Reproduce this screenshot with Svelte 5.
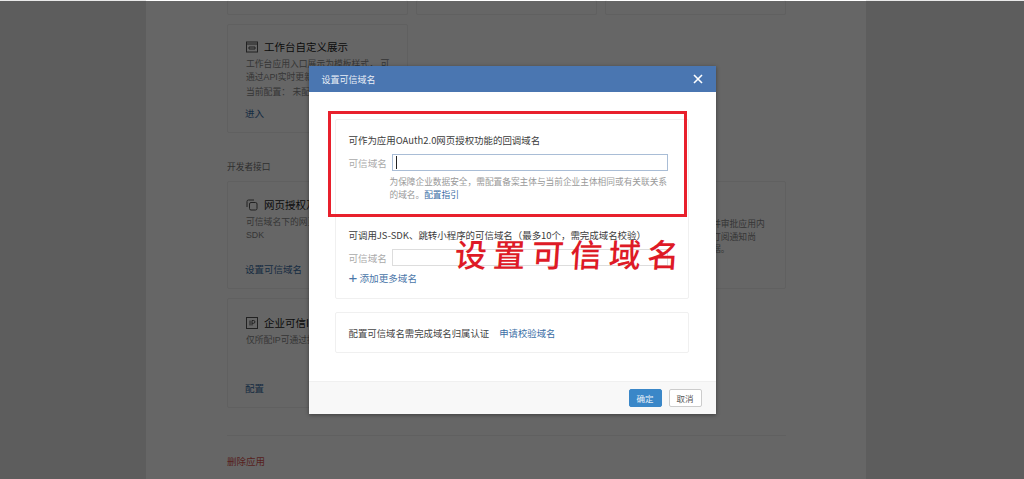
<script lang="ts">
  const rules = [
    { title: '可作为应用OAuth2.0网页授权功能的回调域名', active: true },
    { title: '可调用JS-SDK、跳转小程序的可信域名（最多10个，需完成域名校验）', active: false }
  ];
</script>

<div class="page">
  <main class="content">
    <div class="grid">
      <div class="card stub"></div>
      <div class="card stub"></div>
      <div class="card stub"></div>
    </div>
    <div class="grid">
      <section class="card card-tall">
        <h3>
          <svg viewBox="0 0 12 12" aria-hidden="true"><rect x=".5" y="1" width="11" height="10" /><path d="M.5 3h11M3 6h6v2H3z" /></svg>
          工作台自定义展示
        </h3>
        <p>工作台应用入口展示为模板样式，&nbsp;可<br />通过API实时更新内容</p>
        <p class="config">当前配置： 未配置</p>
        <a class="enter" href="#enter">进入</a>
      </section>
    </div>

    <div class="section-label">开发者接口</div>

    <div class="grid">
      <section class="card card-dev">
        <h3>
          <svg viewBox="0 0 12 12" aria-hidden="true"><path d="M8 1H2.500A1.500 1.500 0 0 0 1 2.500V8" /><rect x="3.500" y="3.500" width="7.500" height="7.500" rx="1.500" /></svg>
          网页授权及JS-SDK
        </h3>
        <p>可信域名下的网页可使用网页授权及调用JS-<br />SDK</p>
        <a class="bottom-link" href="#domain">设置可信域名</a>
      </section>
      <section class="card card-dev">
        <h3>企业微信授权登录</h3>
      </section>
      <section class="card card-dev">
        <h3>审批</h3>
        <p class="right-text">调用接口的应用可关注并审批应用内<br />提交的申请，可收到的订阅通知尚<br />未处理的全部审批的数据。</p>
      </section>
    </div>

    <div class="grid">
      <section class="card card-ip">
        <h3>
          <svg viewBox="0 0 12 12" aria-hidden="true"><rect x=".5" y=".5" width="11" height="11" /><path d="M4 3.500v5M6 8.500v-5h1.500a1.300 1.300 0 0 1 0 2.800H6" /></svg>
          企业可信IP
        </h3>
        <p>仅所配IP可通过接口调用</p>
        <a class="bottom-link" href="#ip">配置</a>
      </section>
    </div>

    <a class="delete" href="#delete">删除应用</a>
  </main>

  <div class="overlay">
    <div class="modal" role="dialog" aria-modal="true" aria-label="设置可信域名">
      <header class="modal-head">
        <span>设置可信域名</span>
        <svg class="close" viewBox="0 0 10 10" aria-hidden="true"><path d="M1 1l8 8M9 1l-8 8" /></svg>
      </header>

      <div class="modal-body">
        <div class="box">
          {#each rules as rule}
            <div class="rule" class:first={rule.active}>
              <div class="rule-title">{rule.title}</div>
              <div class="field">
                <span class="field-label">可信域名</span>
                <div class="input" class:focused={rule.active}>
                  {#if rule.active}<i class="caret"></i>{/if}
                </div>
              </div>
              {#if rule.active}
                <p class="hint">为保障企业数据安全，需配置备案主体与当前企业主体相同或有关联关系的域名。<a href="#guide">配置指引</a></p>
              {:else}
                <a class="add-more" href="#more"><span class="plus">+</span>添加更多域名</a>
              {/if}
            </div>
          {/each}
        </div>

        <div class="box verify">
          <span>配置可信域名需完成域名归属认证</span>
          <a href="#verify">申请校验域名</a>
        </div>
      </div>

      <footer class="modal-foot">
        <button class="btn primary">确定</button>
        <button class="btn">取消</button>
      </footer>

      <!-- annotation painted on top of the screenshot -->
      <div class="red-frame"></div>
      <div class="red-note">设置可信域名</div>
    </div>
  </div>
</div>

<style>
  :global(body) {
    margin: 0;
    background: #e9e9e9;
    font-family: "Liberation Sans", "Noto Sans CJK SC", sans-serif;
  }

  .page {
    position: relative;
    width: 1024px;
    height: 479px;
    overflow: hidden;
    color: #333;
  }

  .content {
    box-sizing: border-box;
    width: 720px;
    height: 479px;
    margin-left: 146px;
    padding-left: 81px;
    padding-right: 80px;
    background: #fff;
    font-size: 10.500px;
  }

  .grid {
    display: grid;
    grid-template-columns: repeat(3, 181px);
    gap: 8px;
    margin-bottom: 9px;
  }

  .card {
    box-sizing: border-box;
    position: relative;
    border: 1px solid #efefef;
    border-radius: 2px;
    padding: 14px 18px;
  }

  .stub {
    height: 15px;
    border-top: 0;
    padding: 0;
  }

  .card-tall {
    height: 109px;
  }

  .card-dev {
    height: 108px;
    padding-top: 15px;
  }

  .card-ip {
    height: 110px;
    padding-top: 16px;
  }

  .card h3 {
    display: flex;
    align-items: center;
    gap: 6px;
    margin: 0;
    font-size: 10.500px;
    font-weight: 400;
    line-height: 16px;
    color: #222;
    white-space: nowrap;
  }

  .card svg {
    width: 12px;
    height: 12px;
    fill: none;
    stroke: #555;
    stroke-width: 1;
    flex-shrink: 0;
  }

  .card p {
    margin: 3px 0 0;
    font-size: 8.800px;
    line-height: 12.500px;
    color: #888;
    white-space: nowrap;
  }

  .card .config {
    margin-top: 3px;
  }

  .card .right-text {
    margin-top: 5px;
  }

  .card a {
    position: absolute;
    left: 17px;
    font-size: 9.500px;
    color: #3a6ea5;
    text-decoration: none;
  }

  .enter {
    bottom: 12px;
  }

  .bottom-link {
    bottom: 12px;
  }

  .section-label {
    margin: 28px 0 8px;
    font-size: 8.700px;
    line-height: 12px;
    color: #777;
  }

  .delete {
    display: block;
    margin-top: 27px;
    padding-top: 19px;
    border-top: 1px solid #f1f1f1;
    font-size: 9.500px;
    line-height: 13px;
    color: #d9534f;
    text-decoration: none;
  }

  .overlay {
    position: absolute;
    inset: 1px 0 0 0;
    display: flex;
    justify-content: center;
    padding-top: 65px;
    background: rgba(0, 0, 0, 0.6);
  }

  .modal {
    position: relative;
    display: flex;
    flex-direction: column;
    width: 407px;
    height: 348px;
    background: #fff;
    box-shadow: 0 1px 4px rgba(0, 0, 0, 0.4);
    font-family: "Noto Sans CJK SC", sans-serif;
  }

  .modal-head {
    display: flex;
    align-items: center;
    justify-content: space-between;
    flex-shrink: 0;
    height: 26px;
    padding: 0 13px;
    background: #4a76b1;
    color: #e9eef6;
    font-size: 9px;
  }

  .close {
    width: 10px;
    height: 10px;
    fill: none;
    stroke: #fff;
    stroke-width: 1.600;
  }

  .modal-body {
    flex: 1;
    padding: 27px 27px 0 26px;
  }

  .box {
    box-sizing: border-box;
    border: 1px solid #f0f0f0;
    border-radius: 2px;
    padding: 13px 13px 0;
    height: 180px;
  }

  .rule-title {
    height: 14px;
    font-size: 9.450px;
    line-height: 14px;
    color: #3c3c3c;
    white-space: nowrap;
  }

  .rule.first {
    height: 95px;
  }

  .field {
    display: flex;
    align-items: center;
    gap: 5px;
    margin-top: 7px;
  }

  .field-label {
    font-size: 9.600px;
    color: #aaa;
    white-space: nowrap;
  }

  .input {
    box-sizing: border-box;
    display: flex;
    align-items: center;
    width: 276px;
    height: 17px;
    padding-left: 3px;
    border: 1px solid #ddd;
    background: #fff;
  }

  .input.focused {
    border-color: #a9bdd6;
  }

  .caret {
    width: 1px;
    height: 13px;
    background: #222;
  }

  .hint {
    width: 278px;
    margin: 4px 0 0 41px;
    font-size: 8.680px;
    line-height: 13px;
    color: #999;
  }

  .hint a {
    color: #3a6ea5;
    text-decoration: none;
  }

  .add-more {
    display: flex;
    align-items: center;
    margin-top: 5px;
    height: 14px;
    font-size: 9.600px;
    color: #4a76a8;
    text-decoration: none;
  }

  .plus {
    width: 11px;
    font-size: 15px;
    font-family: "Liberation Sans", sans-serif;
    line-height: 12px;
  }

  .verify {
    display: flex;
    align-items: center;
    gap: 10px;
    height: 41px;
    margin-top: 13px;
    padding-top: 0;
    font-size: 9.400px;
    color: #444;
  }

  .verify a {
    color: #3a6ea5;
    text-decoration: none;
  }

  .modal-foot {
    display: flex;
    align-items: center;
    justify-content: flex-end;
    gap: 7px;
    height: 33px;
    padding-right: 14px;
    background: #f8f8f8;
    border-top: 1px solid #f0f0f0;
    box-sizing: border-box;
  }

  .btn {
    box-sizing: border-box;
    width: 33px;
    height: 18px;
    padding: 0;
    border: 1px solid #ccc;
    border-radius: 2px;
    background: #fff;
    color: #555;
    font-family: inherit;
    font-size: 8.500px;
  }

  .btn.primary {
    background: #3a87c8;
    border-color: #3a87c8;
    color: #e6f0f8;
  }

  .red-frame {
    position: absolute;
    left: 19px;
    top: 45px;
    width: 359px;
    height: 106px;
    box-sizing: border-box;
    border: 3px solid #e8202c;
  }

  .red-note {
    position: absolute;
    left: 146px;
    top: 169px;
    color: #de1a26;
    font-size: 32px;
    line-height: 36px;
    font-weight: 500;
    letter-spacing: 6.500px;
    white-space: nowrap;
    transform: skewX(-4deg);
  }
</style>
